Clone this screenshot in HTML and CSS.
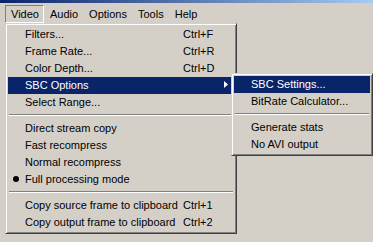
FILE: index.html
```html
<!DOCTYPE html>
<html lang="en">
<head>
  <meta charset="UTF-8" />
  <title>Video menu</title>
  <link rel="stylesheet" href="styles.css">
</head>
<body>

<div class="titlebar"></div>

<div class="menubar">
  <div class="mb-item open">Video
    <!-- Video dropdown -->
    <div class="menu main">
      <div class="row"><span>Filters...</span><span>Ctrl+F</span></div>
      <div class="row"><span>Frame Rate...</span><span>Ctrl+R</span></div>
      <div class="row"><span>Color Depth...</span><span>Ctrl+D</span></div>
      <div class="row hl sub"><span>SBC Options</span><span></span>
        <div class="menu submenu">
          <div class="row hl"><span>SBC Settings...</span></div>
          <div class="row"><span>BitRate Calculator...</span></div>
          <div class="sep"></div>
          <div class="row"><span>Generate stats</span></div>
          <div class="row"><span>No AVI output</span></div>
        </div>
      </div>
      <div class="row"><span>Select Range...</span></div>
      <div class="sep"></div>
      <div class="row"><span>Direct stream copy</span></div>
      <div class="row"><span>Fast recompress</span></div>
      <div class="row"><span>Normal recompress</span></div>
      <div class="row checked"><span>Full processing mode</span></div>
      <div class="sep"></div>
      <div class="row"><span>Copy source frame to clipboard</span><span>Ctrl+1</span></div>
      <div class="row"><span>Copy output frame to clipboard</span><span>Ctrl+2</span></div>
    </div>
  </div>
  <div class="mb-item">Audio</div>
  <div class="mb-item">Options</div>
  <div class="mb-item">Tools</div>
  <div class="mb-item">Help</div>
</div>

</body>
</html>
```

FILE: styles.css
```css
body { margin: 0; font-family: "Liberation Sans", Arial, sans-serif; font-size: 11px; background: #d4d0c8; color: #000; height: 242px; overflow: hidden; }
.titlebar { height: 3px; background: linear-gradient(to right, #0a246a, #a6caf0); }
.menubar { display: flex; padding: 2px 0 0 5px; }
.mb-item { position: relative; height: 16px; line-height: 16px; padding: 0 4px 0 5px; border: 1px solid transparent; white-space: nowrap; }
.mb-item.open { border-color: #808080 #fff #fff #808080; }

.menu { position: absolute; box-sizing: border-box; padding: 2px; color: #000;
        border: 1px solid; border-color: #d4d0c8 #404040 #404040 #d4d0c8;
        box-shadow: inset 1px 1px #fff, inset -1px -1px #808080; background: #d4d0c8; }
.main { left: -1px; top: 17px; width: 232px; }
.submenu { left: calc(100% - 3px); top: -4px; width: 142px; z-index: 2; }

.row { position: relative; display: grid; grid-template-columns: 158px auto; height: 17px; line-height: 17px; padding-left: 17px; white-space: nowrap; }
.row.hl { background: #0a246a; color: #fff; }
.submenu .row { grid-template-columns: auto; }
.sep { height: 0; margin: 3px 1px 4px; border-top: 1px solid #808080; border-bottom: 1px solid #fff; }

.row.checked::before { content: ""; position: absolute; left: 5px; top: 5px; width: 6px; height: 6px; border-radius: 50%; background: #000; }
.row.sub::after { content: ""; position: absolute; right: 6px; top: 4px; width: 4px; height: 7px; background: currentColor; clip-path: polygon(0 0, 100% 50%, 0 100%); }
```
